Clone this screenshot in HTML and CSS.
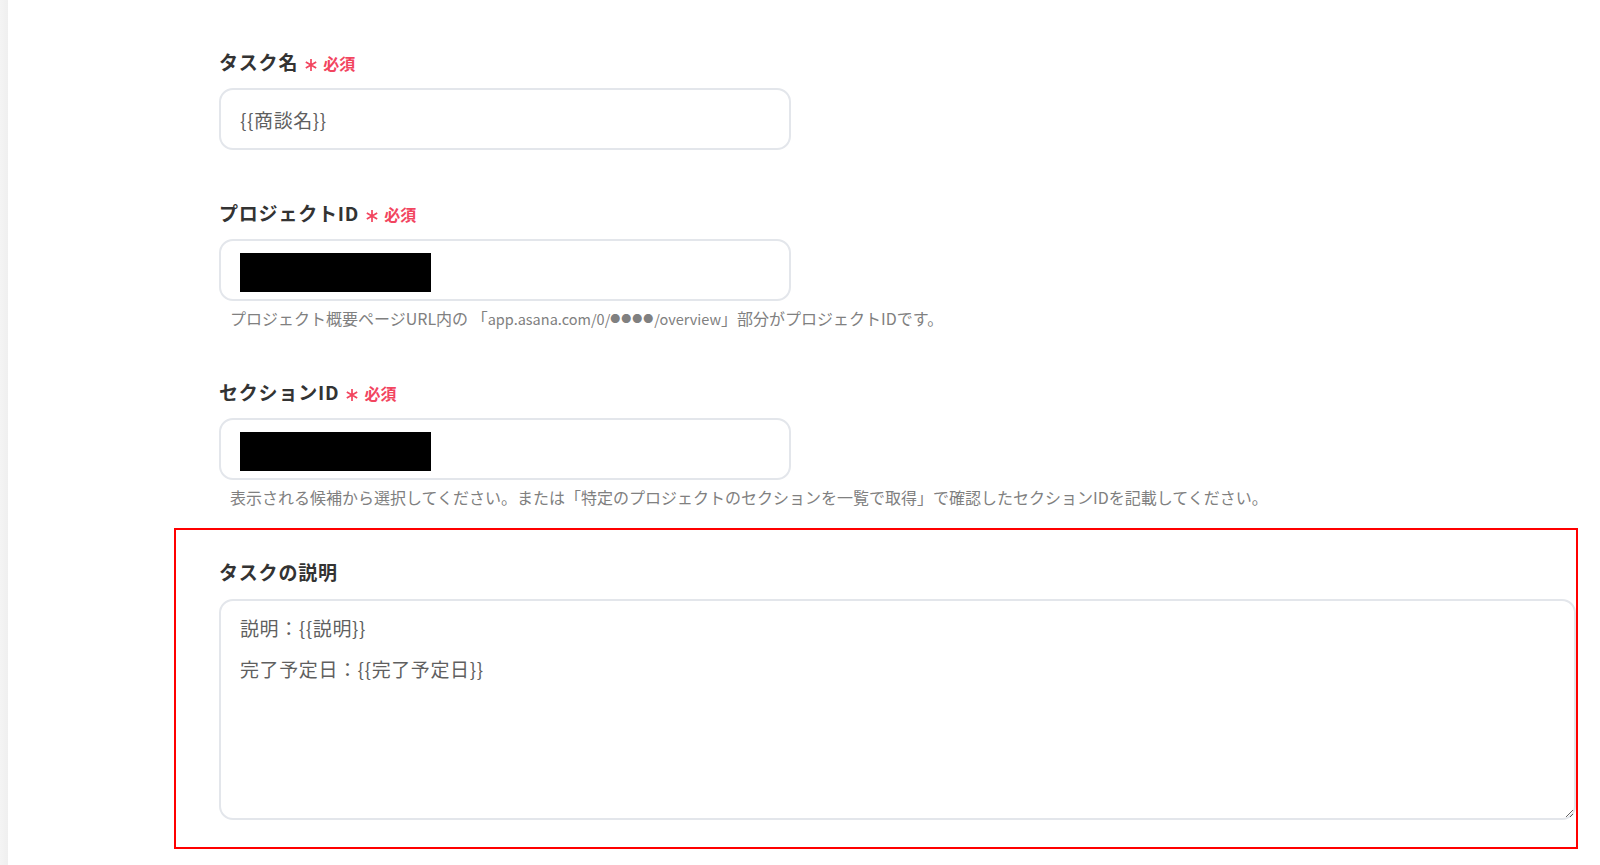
FILE: index.html
```html
<!DOCTYPE html>
<html lang="ja">
  <head>
    <meta charset="UTF-8">
    <meta name="viewport" content="width=device-width, initial-scale=1.0">
    <title>タスクを追加</title>
    <link rel="stylesheet" href="styles.css">
  </head>
  <body>
    <div class="app">
      <div class="rail"></div>

      <div class="form">
        <div class="field">
          <div class="field-label">
            タスク名
            <span class="required">
              <svg class="required-mark" viewBox="0 0 14 14" width="14" height="14">
                <path d="M7 1v12M1.8 4l10.4 6M1.8 10l10.4-6" />
              </svg>
              必須
            </span>
          </div>
          <div class="text-input">{{商談名}}</div>
        </div>

        <div class="field">
          <div class="field-label">
            プロジェクトID
            <span class="required">
              <svg class="required-mark" viewBox="0 0 14 14" width="14" height="14">
                <path d="M7 1v12M1.8 4l10.4 6M1.8 10l10.4-6" />
              </svg>
              必須
            </span>
          </div>
          <div class="text-input"><span class="redacted"></span></div>
          <div class="help">プロジェクト概要ページURL内の 「<span class="url">app.asana.com/0/<span class="dots">●●●●</span>/overview</span>」部分がプロジェクトIDです。</div>
        </div>

        <div class="field">
          <div class="field-label">
            セクションID
            <span class="required">
              <svg class="required-mark" viewBox="0 0 14 14" width="14" height="14">
                <path d="M7 1v12M1.8 4l10.4 6M1.8 10l10.4-6" />
              </svg>
              必須
            </span>
          </div>
          <div class="text-input"><span class="redacted"></span></div>
          <div class="help">表示される候補から選択してください。または「特定のプロジェクトのセクションを一覧で取得」で確認したセクションIDを記載してください。</div>
        </div>

        <div class="field field-highlight">
          <div class="field-label">タスクの説明</div>
          <textarea class="text-area" readonly>説明：{{説明}}
完了予定日：{{完了予定日}}</textarea>
        </div>
      </div>
    </div>
  </body>
</html>
```

FILE: styles.css
```css
body {
  font-family: "Noto Sans CJK JP", "Noto Sans", sans-serif;
  background: #fff;
  color: #333;
  margin: 0;
  overflow: hidden;
}

.app {
  display: flex;
  min-height: 865px;
}

.rail {
  width: 8px;
  flex-shrink: 0;
  background: linear-gradient(to right, #f4f4f4, #efefef);
}

.form {
  margin-left: 166px;
  width: 1404px;
  padding-top: 49px;
}

.field {
  padding-left: 45px;
}

.field + .field {
  margin-top: 50px;
}

.field-label {
  display: flex;
  align-items: center;
  gap: 6px;
  height: 24px;
  font-size: 19px;
  font-weight: 700;
  letter-spacing: 0.8px;
  color: #333;
  margin-bottom: 15px;
}

.required {
  display: flex;
  align-items: center;
  gap: 5px;
  font-size: 16px;
  font-weight: 700;
  letter-spacing: 0;
  color: #f2455f;
  padding-top: 3px;
}

.required-mark {
  stroke: #f2455f;
  stroke-width: 1.7;
  fill: none;
  margin-top: 4px;
}

.text-input {
  box-sizing: border-box;
  display: flex;
  align-items: center;
  width: 572px;
  height: 62px;
  padding: 0 19px;
  border: 2px solid #e3e6eb;
  border-radius: 14px;
  font-size: 19px;
  letter-spacing: 0.6px;
  color: #5f5f5f;
}

.redacted {
  display: block;
  width: 191px;
  height: 39px;
  background: #000;
  margin: 4px 0 0 0;
}

.help {
  margin-top: 7px;
  padding-left: 11px;
  font-size: 16px;
  line-height: 20px;
  color: #808080;
  white-space: nowrap;
}

.help .url {
  font-size: 14.5px;
}

.help .dots {
  font-size: 10px;
  letter-spacing: 1px;
  vertical-align: 2px;
}

.field-highlight {
  box-sizing: border-box;
  border: 2px solid #ff0000;
  padding: 29px 0 27px 43px;
}

.field-highlight .field-label {
  margin-bottom: 16px;
}

.field + .field-highlight {
  margin-top: 21px;
}

.text-area {
  box-sizing: border-box;
  display: block;
  width: 100%;
  height: 221px;
  margin: 0;
  padding: 6px 19px;
  border: 2px solid #e3e6eb;
  border-radius: 14px;
  font-family: inherit;
  font-size: 19px;
  letter-spacing: 0.6px;
  line-height: 41px;
  color: #5f5f5f;
  outline: none;
  resize: both;
}
```
